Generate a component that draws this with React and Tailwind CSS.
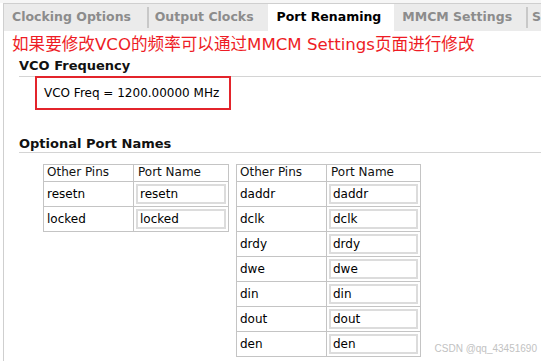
import React from "react";

const leftRows = ["resetn", "locked"];
const rightRows = ["daddr", "dclk", "drdy", "dwe", "din", "dout", "den"];

function PinTable({ rows, w1, w2 }) {
  return (
    <div className="border border-[#c4c4c4] flex flex-col" style={{ width: w1 + w2 + 2 }}>
      <div className="flex h-[16px] text-[12px] leading-[15px]">
        <div className="pl-[3px] border-r border-[#c4c4c4] text-[#111]" style={{ width: w1 }}>Other Pins</div>
        <div className="pl-[4px] text-[#111]" style={{ width: w2 }}>Port Name</div>
      </div>
      {rows.map((r) => (
        <div key={r} className="flex h-[25px] border-t border-[#c4c4c4] text-[12px]">
          <div className="pl-[3px] border-r border-[#c4c4c4] flex items-center text-black" style={{ width: w1 }}>{r}</div>
          <div className="p-[2px] flex" style={{ width: w2 }}>
            <div className="flex-1 border-2 border-[#dcdcdc] flex items-center pl-[2px] text-black">{r}</div>
          </div>
        </div>
      ))}
    </div>
  );
}

export default function App() {
  return (
    <div
      className="w-[541px] h-[361px] bg-white relative overflow-hidden"
      style={{ fontFamily: '"DejaVu Sans", "Noto Sans CJK SC", sans-serif' }}
    >
      <div className="h-[3px] bg-[#f6f6f6]" />
      <div className="pl-[3px] h-[358px]">
        <div className="h-full border-l border-t border-[#cfcfcf] flex flex-col">
          {/* Tabs */}
          <div className="flex h-[27px] bg-[#ebebeb] text-[12.5px] font-bold whitespace-nowrap">
            <div className="w-[143px] pl-[8px] flex items-center text-[#8c8c8c]">Clocking Options</div>
            <div className="w-[2px] my-[3px] bg-[#c8c8c8]" />
            <div className="w-[120px] pl-[6px] flex items-center text-[#8c8c8c]">Output Clocks</div>
            <div className="w-[126px] pl-[8px] flex items-center bg-white text-black">Port Renaming</div>
            <div className="w-[132px] pl-[8px] flex items-center text-[#8c8c8c]">MMCM Settings</div>
            <div className="w-[2px] my-[3px] bg-[#c8c8c8]" />
            <div className="pl-[4px] flex items-center text-[#8c8c8c]">S</div>
          </div>
          {/* Annotation */}
          <div className="pl-[8px] pt-[3px] h-[27px] text-[16.6px] leading-[22px] text-[#ee1c25] whitespace-nowrap">
            如果要修改VCO的频率可以通过MMCM Settings页面进行修改
          </div>
          {/* VCO Frequency */}
          <div className="pl-[15px]">
            <div className="text-[13px] font-bold text-[#111] leading-[16px] h-[18px]">VCO Frequency</div>
            <div className="border-t border-[#d4d4d4]" />
            <div className="ml-[16px] -mt-[1px] w-[196px] h-[34px] border-2 border-[#e3242b] flex items-center pl-[7px] text-[12px] text-black whitespace-nowrap">
              VCO Freq = 1200.00000 MHz
            </div>
          </div>
          {/* Optional Port Names */}
          <div className="pl-[15px] mt-[26px]">
            <div className="text-[13px] font-bold text-[#111] leading-[16px] h-[16px]">Optional Port Names</div>
            <div className="border-t border-[#d4d4d4]" />
            <div className="flex gap-[7px] ml-[24px] mt-[11px] items-start">
              <PinTable rows={leftRows} w1={90} w2={94} />
              <PinTable rows={rightRows} w1={90} w2={93} />
            </div>
          </div>
        </div>
      </div>
      <div className="absolute right-[4px] bottom-[5px] text-[10px] text-[#c2c2c2]" style={{ fontFamily: '"Liberation Sans", sans-serif' }}>
        CSDN @qq_43451690
      </div>
    </div>
  );
}
